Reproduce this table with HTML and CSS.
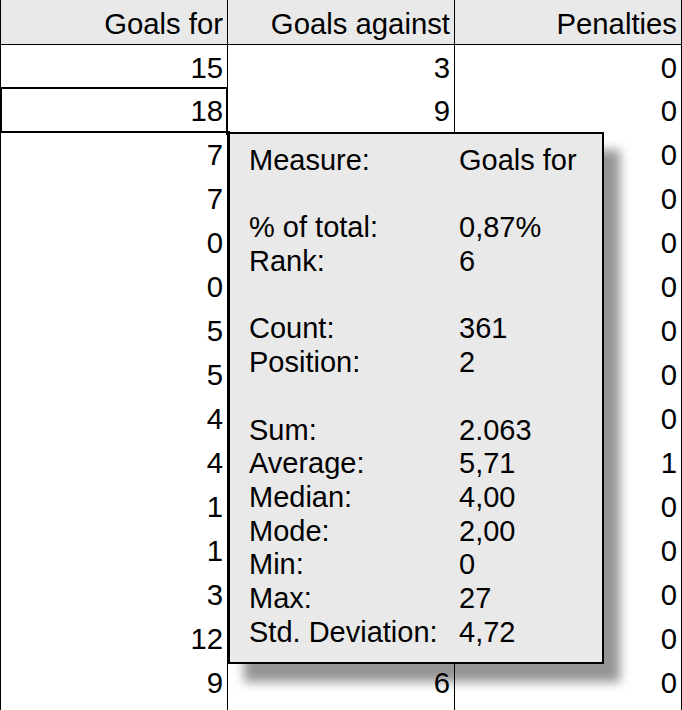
FILE: index.html
```html
<!DOCTYPE html>
<html>
<head>
<meta charset="utf-8">
<link rel="stylesheet" href="styles.css">
</head>
<body>
<div class="sheet">
  <div class="shadow"></div>
  <div class="grid">
    <div class="cell head">Goals for</div><div class="cell head">Goals against</div><div class="cell head">Penalties</div>
    <div class="cell">15</div><div class="cell">3</div><div class="cell">0</div>
    <div class="cell selected">18</div><div class="cell">9</div><div class="cell">0</div>
    <div class="cell">7</div><div class="cell"></div><div class="cell">0</div>
    <div class="cell">7</div><div class="cell"></div><div class="cell">0</div>
    <div class="cell">0</div><div class="cell"></div><div class="cell">0</div>
    <div class="cell">0</div><div class="cell"></div><div class="cell">0</div>
    <div class="cell">5</div><div class="cell"></div><div class="cell">0</div>
    <div class="cell">5</div><div class="cell"></div><div class="cell">0</div>
    <div class="cell">4</div><div class="cell"></div><div class="cell">0</div>
    <div class="cell">4</div><div class="cell"></div><div class="cell">1</div>
    <div class="cell">1</div><div class="cell"></div><div class="cell">0</div>
    <div class="cell">1</div><div class="cell"></div><div class="cell">0</div>
    <div class="cell">3</div><div class="cell"></div><div class="cell">0</div>
    <div class="cell">12</div><div class="cell"></div><div class="cell">0</div>
    <div class="cell">9</div><div class="cell">6</div><div class="cell">0</div>
    <div class="cell"></div><div class="cell"></div><div class="cell"></div>
  </div>
  <div class="tooltip">
    <div class="lbl">Measure:</div><div class="val">Goals for</div>
    <div class="blank"></div>
    <div class="lbl">% of total:</div><div class="val">0,87%</div>
    <div class="lbl">Rank:</div><div class="val">6</div>
    <div class="blank"></div>
    <div class="lbl">Count:</div><div class="val">361</div>
    <div class="lbl">Position:</div><div class="val">2</div>
    <div class="blank"></div>
    <div class="lbl">Sum:</div><div class="val">2.063</div>
    <div class="lbl">Average:</div><div class="val">5,71</div>
    <div class="lbl">Median:</div><div class="val">4,00</div>
    <div class="lbl">Mode:</div><div class="val">2,00</div>
    <div class="lbl">Min:</div><div class="val">0</div>
    <div class="lbl">Max:</div><div class="val">27</div>
    <div class="lbl">Std. Deviation:</div><div class="val">4,72</div>
  </div>
</div>
</body>
</html>
```

FILE: styles.css
```css
html, body {
  margin: 0;
  padding: 0;
  background: #ffffff;
}
body {
  width: 682px;
  height: 710px;
  overflow: hidden;
  font-family: "Liberation Sans", Arial, sans-serif;
  font-size: 29.3px;
  color: #000;
}
.sheet {
  position: relative;
  width: 682px;
  height: 710px;
  overflow: hidden;
}
.grid {
  position: relative;
  z-index: 1;
  display: grid;
  grid-template-columns: 228px 227px 227px;
  grid-template-rows: 45px 43px repeat(15, 44px);
}
.cell {
  box-sizing: border-box;
  border-right: 1px solid #000;
  text-align: right;
  padding: 3px 4px 0 0;
  line-height: 40px;
  white-space: nowrap;
}
.cell:nth-child(3n+1) {
  border-left: 1px solid #000;
}
.head {
  background: #e9e9e9;
  border-bottom: 1px solid #000;
  padding-top: 4px;
  line-height: 40px;
}
.selected {
  position: relative;
}
.selected::after {
  content: "";
  position: absolute;
  left: -1px;
  top: -1px;
  right: -1px;
  bottom: -1px;
  border: 2px solid #000;
}
.selected::before {
  content: "";
  position: absolute;
  right: -3px;
  bottom: -3px;
  width: 4px;
  height: 4px;
  background: #000;
  z-index: 1;
}
.shadow {
  position: absolute;
  z-index: 0;
  left: 228px;
  top: 132px;
  width: 376px;
  height: 532px;
  box-shadow: 16px 18px 10px rgba(0, 0, 0, 0.42);
}
.tooltip {
  position: absolute;
  z-index: 2;
  left: 228px;
  top: 132px;
  width: 376px;
  height: 532px;
  box-sizing: border-box;
  border: 2px solid #000;
  background: #e9e9e9;
  padding: 10px 0 0 19px;
  display: grid;
  grid-template-columns: 210px 1fr;
  grid-auto-rows: 33.7px;
  line-height: 33.7px;
  font-size: 29px;
  white-space: nowrap;
}
.lbl {
  min-width: 0;
}
.blank {
  grid-column: 1 / 3;
}
```
